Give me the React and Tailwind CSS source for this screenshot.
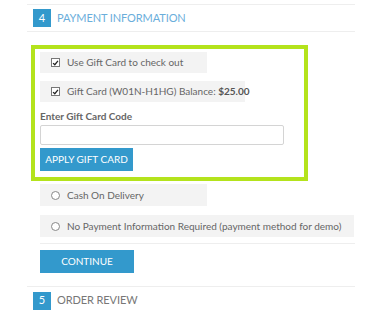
import React from 'react';

const font = { fontFamily: '"Lato", "Open Sans", sans-serif' };

const CheckBox = () => (
  <span className="w-[9px] h-[9px] border border-[#777] bg-white flex items-center justify-center shrink-0">
    <svg viewBox="0 0 10 10" className="w-[8px] h-[8px]">
      <path d="M1.5 5.2 L4 7.5 L8.5 2" fill="none" stroke="#222" strokeWidth="1.8" />
    </svg>
  </span>
);

const Radio = () => (
  <span className="w-[9px] h-[9px] rounded-full border border-[#888] bg-white shrink-0" />
);

const Option = ({ width, height, children, control }) => (
  <div className={`${width} ${height} bg-[#f3f3f3] flex items-center pl-[11px] gap-[7px] text-[10px] text-[#666] whitespace-nowrap`}>
    {control}
    <span>{children}</span>
  </div>
);

const StepHeader = ({ num, title, color }) => (
  <div className="h-[23px] flex items-center pl-[6px] gap-[6px]">
    <span className="w-[18px] h-[18px] bg-[#3399cc] text-white text-[11px] flex items-center justify-center">
      {num}
    </span>
    <span className={`text-[11px] tracking-[-0.1px] ${color}`}>{title}</span>
  </div>
);

export default function App() {
  return (
    <div className="bg-white w-[374px] h-[328px] pt-[4px]" style={font}>
      <div className="ml-[27px] w-[328px]">
        <div className="border-t border-b border-[#eeeeee] h-[28px] flex items-center">
          <StepHeader num="4" title="PAYMENT INFORMATION" color="text-[#6aaedb]" />
        </div>

        <div className="ml-[4px] mt-[13px] w-[277px] border-[4px] border-[#b4e31c] pt-[3px] pb-[6px] pl-[5px]">
          <div className="flex flex-col gap-[8px]">
            <Option width="w-[167px]" height="h-[21px]" control={<CheckBox />}>Use Gift Card to check out</Option>
            <Option width="w-[205px]" height="h-[21px]" control={<CheckBox />}>
              Gift Card (W01N-H1HG) Balance: <b className="font-bold text-[#555]">$25.00</b>
            </Option>
          </div>
          <div className="mt-[8px] h-[12px] leading-[12px] text-[10px] font-bold text-[#666]">Enter Gift Card Code</div>
          <div className="mt-[3px] w-[244px] h-[20px] border border-[#d4d4d4] rounded-[2px] bg-white" />
          <button className="mt-[3px] w-[93px] h-[23px] bg-[#3399cc] text-white text-[10px] flex items-center justify-center">
            APPLY GIFT CARD
          </button>
        </div>

        <div className="ml-[13px] mt-[3px] flex flex-col gap-[9px]">
          <Option width="w-[167px]" height="h-[22px]" control={<Radio />}>Cash On Delivery</Option>
          <Option width="w-[314px]" height="h-[22px]" control={<Radio />}>
            No Payment Information Required (payment method for demo)
          </Option>
        </div>

        <div className="ml-[13px] mt-[6px] border-t border-[#eeeeee] pt-[6px] pb-[13px]">
          <button className="w-[94px] h-[23px] bg-[#3399cc] text-white text-[10px] flex items-center justify-center">
            CONTINUE
          </button>
        </div>

        <div className="border-t border-[#eeeeee] pt-[2px]">
          <StepHeader num="5" title="ORDER REVIEW" color="text-[#777777]" />
        </div>
      </div>
    </div>
  );
}
